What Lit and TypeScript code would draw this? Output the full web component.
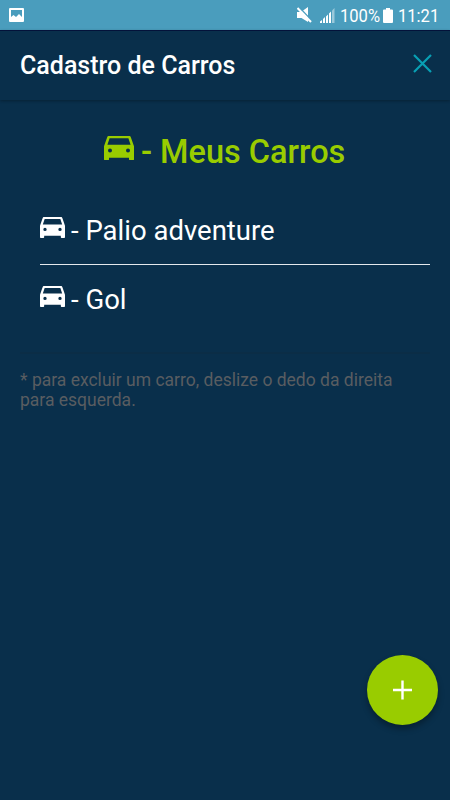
import { LitElement, html, css } from "lit";
import { customElement, property } from "lit/decorators.js";

@customElement("car-icon")
class CarIcon extends LitElement {
  static styles = css`
    :host { display: block; flex: none; }
    svg { display: block; width: 100%; height: 100%; }
  `;
  render() {
    return html`<svg viewBox="0 0 30 24.4" preserveAspectRatio="none" fill="currentColor">
      <path fill-rule="evenodd" d="M26.9 1.500C26.600.500 26 0 25 0H5C4 0 3.400.500 3.100 1.500L0 10.200V23.200C0 24 .500 24.400 1.200 24.400H3.800C4.500 24.400 5 24 5 23.200V21.700H25V23.200C25 24 25.500 24.400 26.200 24.400H28.800C29.500 24.400 30 24 30 23.200V10.200ZM5.600 2.200H24.400L26.600 8.700H3.400ZM6 12.400A2 2 0 1 1 6 16.400A2 2 0 1 1 6 12.400ZM24 12.400A2 2 0 1 1 24 16.400A2 2 0 1 1 24 12.400Z"/>
    </svg>`;
  }
}

@customElement("status-bar")
class StatusBar extends LitElement {
  static styles = css`
    :host {
      display: flex; align-items: center; height: 30px; box-sizing: border-box;
      padding: 0 10px 0 9px; background: #4a9dbd; color: #fff;
      font-size: 18px; line-height: 30px;
    }
    svg { display: block; flex: none; }
    .space { flex: 1; }
    .mute { margin-right: 8px; }
    .signal { margin-right: 5px; }
    .level { width: 39px; white-space: nowrap; padding-top: 1px; }
    .battery { margin: 0 5px 0 4px; }
    .clock { width: 42px; white-space: nowrap; padding-top: 1px; }
    .condensed { display: inline-block; transform: scaleX(.92); transform-origin: left; }
  `;
  render() {
    return html`
      <svg width="15" height="14" viewBox="0 0 15 14">
        <path fill="#fff" fill-rule="evenodd" d="M1 0H14Q15 0 15 1V13Q15 14 14 14H1Q0 14 0 13V1Q0 0 1 0ZM2 2V9L4.500 7L7 9L10 6L13 9V2Z"/>
      </svg>
      <span class="space"></span>
      <svg class="mute" width="15" height="16" viewBox="0 0 15 16">
        <path fill="#fff" d="M0 5H4L11 0V15L4.500 11H0Z"/>
        <path d="M2 .2L14.800 13.500" stroke="#4a9dbd" stroke-width="1.500"/>
        <path d="M.5 1L14 15" stroke="#fff" stroke-width="2"/>
      </svg>
      <svg class="signal" width="15" height="15" viewBox="0 0 15 15" fill="#fff">
        <path d="M0 15V13.500L2 12V15ZM3 15V11L5 9V15ZM6 15V8.500L8 6.500V15ZM9 15V5.500L11 3.500V15Z"/>
        <path opacity=".45" d="M12 15V2.500L14.500 0V15Z"/>
      </svg>
      <span class="level"><span class="condensed">100%</span></span>
      <svg class="battery" width="10" height="15" viewBox="0 0 10 15">
        <path fill="#fff" d="M3 0H7V1.500H9Q10 1.500 10 2.500V14Q10 15 9 15H1Q0 15 0 14V2.500Q0 1.500 1 1.500H3Z"/>
      </svg>
      <span class="clock"><span class="condensed">11:21</span></span>
    `;
  }
}

@customElement("app-root")
class AppRoot extends LitElement {
  @property({ attribute: false }) cars = ["Palio adventure", "Gol"];

  static styles = css`
    :host {
      display: flex; flex-direction: column; position: relative;
      width: 450px; height: 800px; overflow: hidden; box-sizing: border-box;
      background: #092f4b; color: #fff; font-family: Roboto, sans-serif;
    }
    .toolbar {
      display: flex; align-items: center; justify-content: space-between;
      height: 70px; box-sizing: border-box; padding: 0 18px 0 20px; flex: none;
      border-top: 1px solid #03123a;
      box-shadow: 0 1px 3px rgba(0, 0, 0, .3);
    }
    .title { font-size: 25px; font-weight: 500; line-height: 30px; white-space: nowrap; }
    .close { display: block; margin-top: -5px; }
    .heading {
      display: flex; align-items: flex-start; height: 40px; margin: 32px 0 0 104px;
      color: #9c0; font-size: 32.5px; font-weight: 500; line-height: 40px; white-space: nowrap;
    }
    .heading car-icon { width: 30px; height: 24.400px; margin: 3.600px 7px 0 0; }
    .list { display: flex; flex-direction: column; margin: 24px 20px 0 40px; }
    .item {
      display: flex; align-items: flex-start; height: 69px; box-sizing: border-box;
      padding-top: 18px; font-size: 27.5px; line-height: 34px; white-space: nowrap;
    }
    .item:first-child { border-bottom: 1px solid #e4e8ec; }
    .item car-icon { width: 25px; height: 21px; margin: 3px 6px 0 0; }
    .rule { height: 2px; margin: 18px 20px 0; background: #0b2d46; }
    .note { margin: 16px 20px 0; color: #595d61; font-size: 17.5px; line-height: 20px; white-space: nowrap; }
    .fab {
      position: absolute; left: 367px; top: 655px; width: 71px; height: 70px;
      display: flex; align-items: center; justify-content: center; padding: 0; border: 0;
      border-radius: 50%; background: #9c0; box-shadow: 0 4px 6px rgba(0, 0, 0, .32);
    }
  `;

  render() {
    return html`
      <status-bar></status-bar>
      <header class="toolbar">
        <div class="title">Cadastro de Carros</div>
        <svg class="close" width="19" height="19" viewBox="0 0 19 19">
          <path d="M1 1L18 18M18 1L1 18" stroke="#08a0b4" stroke-width="2.200"/>
        </svg>
      </header>
      <div class="heading"><car-icon></car-icon><span>- Meus Carros</span></div>
      <div class="list">
        ${this.cars.map((car) => html`<div class="item"><car-icon></car-icon><span>- ${car}</span></div>`)}
      </div>
      <div class="rule"></div>
      <div class="note">* para excluir um carro, deslize o dedo da direita<br />para esquerda.</div>
      <button class="fab" aria-label="Adicionar">
        <svg width="20" height="20" viewBox="0 0 20 20"><path d="M9.500 .5V19.500M0 10H19" stroke="#fff" stroke-width="2.400"/></svg>
      </button>
    `;
  }
}
